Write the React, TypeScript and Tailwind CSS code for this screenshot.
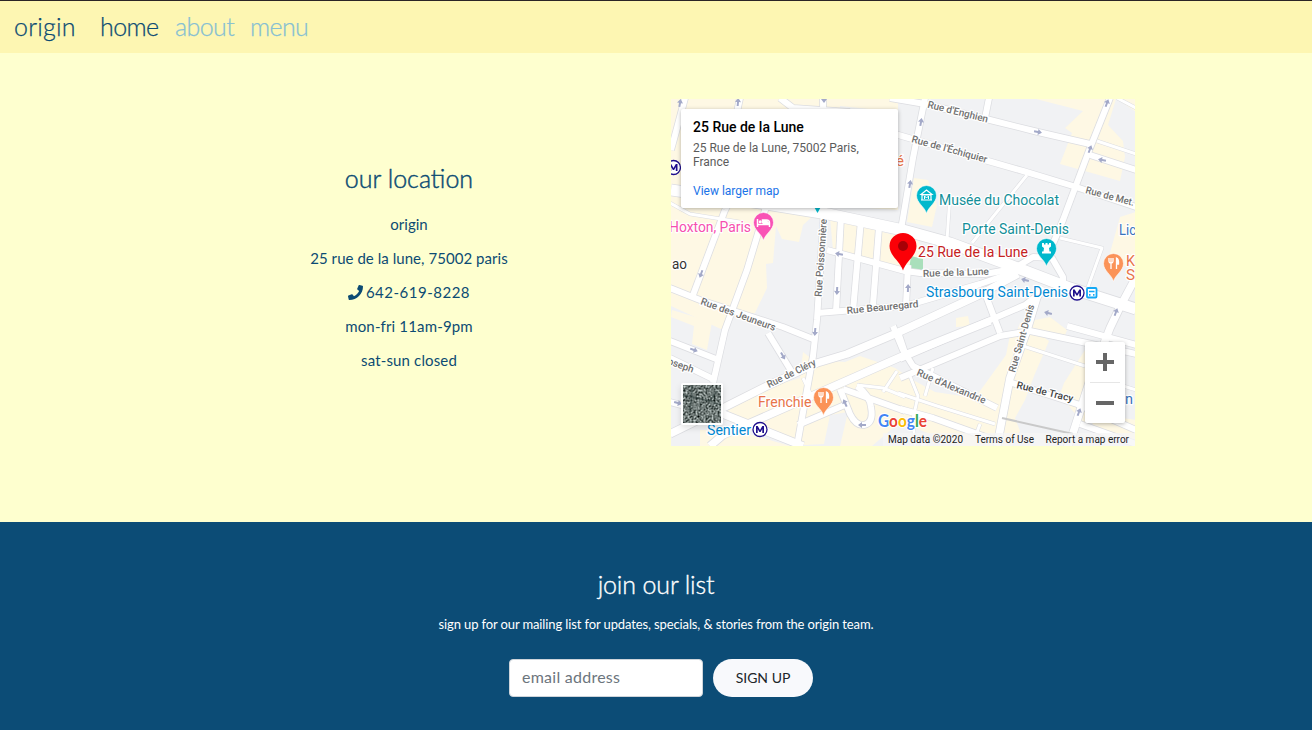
import React from "react";
import { FaPhone } from "react-icons/fa";

const minorRoads = [
  "M1097 141L1136 154", "M1117 98L1136 108", "M1027 175L992 218L972 243", "M950 195L949 210L947 240",
  "M1060 238L1102 248L1088 287", "M933 368L925 396", "M910 376L918 396L913 419L915 446",
  "M898 393L937 406L995 424", "M1023 346L1085 366", "M857 385L883 388L905 397", "M883 392L897 371",
  "M803 378L813 399", "M980 424L976 435", "M670 203L690 214L740 222", "M1120 385L1136 390",
];

const roads = [
  "M890 98L925 104L990 120L1038 132L1090 144", "M1090 155L1136 170",
  "M895 134L988 161L1023 171L1073 186L1136 207", "M925 98L913 158L903 218L900 235",
  "M989 98L985 118", "M1110 98L1090 148L1063 220L1047 258",
  "M725 210L693 295", "M790 150L765 210L747 270L725 330L713 383", "M736 190L725 210",
  "M670 288L700 300L783 327L813 339", "M823 98L824 210L817 320L813 356L797 446",
  "M841 217L836 312", "M861 220L853 311", "M879 227L873 305",
  "M827 250L905 271L920 273L985 274L1013 269L1033 257L1052 258L1063 277L1063 288",
  "M817 313L905 306L980 284L1015 272", "M908 265L906 306",
  "M670 341L716 359", "M670 358L713 379", "M670 402L685 406",
  "M768 333L793 374", "M897 329L905 353", "M798 425L847 404",
  "M840 389L850 414Q856 426 864 425Q874 423 871 407Q870 396 857 386", "M843 389L905 411",
  "M893 326L903 350L913 366L997 408", "M983 288L1000 333",
  "M900 378L1000 336L1030 331L1087 343L1136 354", "M900 409L933 418L997 441",
  "M1012 383L1077 404L1136 430", "M1080 424L1136 444", "M1067 326L1136 345",
  "M685 98L677 128L671 150", "M740 98L730 145", "M780 98L793 108L850 112",
  "M900 359L1025 305L1043 291", "M920 438L925 446",
];

const mainRoads = [
  "M670 434L723 408L767 386L817 363L847 354L897 333L977 296L1018 274",
  "M710 446L723 435L830 388L905 355L990 321",
  "M700 401L723 414L803 446",
  "M1043 287L1037 297L1027 330L1010 378L997 446",
  "M1136 277L1120 307L1110 328L1090 380L1073 433L1067 448",
];

const yellowBlocks = [
  "M671 99H898V112L840 106L835 170L898 180V210L825 205L803 225L799 242L782 239L776 226L773 263L766 264L767 288L755 313L730 317L723 330L671 306Z",
  "M672 310L712 322L707 350L692 344L694 326L671 317Z",
  "M830 218L890 234L918 240L926 258L900 268L833 250Z",
  "M1036 99H1116L1108 125L1123 141L1125 157L1120 181L1060 164L1072 133L1065 128L1083 111Z",
  "M1117 99H1136V112Z",
  "M914 178L928 180L937 205L932 227L907 222Z",
  "M1136 212L1120 217L1108 260L1136 270Z",
  "M803 352L813 360L845 362L860 356L895 368L913 380L935 392L975 398L1006 355L1010 335L1033 329L1049 341L1034 376L1025 400L1015 418L1020 431L1010 446H960L900 422L872 446H840L848 412L830 415L824 444L805 445L725 420L728 408L760 390L800 378Z",
  "M700 430L735 430L790 446H700Z",
  "M956 318L968 316L970 326L956 327Z", "M1020 323L1050 317L1067 330L1064 338L1016 333Z",
  "M1064 383L1085 350V425L1072 410L1060 394Z",
  "M1086 413L1136 420V440L1095 428Z",
];

const MapLabel = ({ x, y, w, size = 14, fill = "#707070", r = 0, weight = 400, children }: {
  x: number; y: number; w: number; size?: number; fill?: string; r?: number; weight?: number; children: string;
}) => (
  <text x={x} y={y} fontSize={size} fill={fill} fontWeight={size === 10 ? 500 : weight} textLength={w} lengthAdjust="spacingAndGlyphs"
    transform={`rotate(${r} ${x} ${y})`} stroke="#fff" strokeWidth="2.5" strokeLinejoin="round" paintOrder="stroke">
    {children}
  </text>
);

const Pin = ({ x, y, color, children }: { x: number; y: number; color: string; children?: React.ReactNode }) => (
  <g transform={`translate(${x} ${y})`}>
    <path d="M0 17.500C-1.500 11 -10 7 -10 -.5A10 10 0 1 1 10 -.5C10 7 1.500 11 0 17.500Z" fill={color} stroke="#fff" strokeWidth="0.600" />
    {children}
  </g>
);

const Fork = () => (
  <g fill="none" stroke="#fff" strokeWidth="1.300">
    <path d="M-4.500 -6V-3Q-4.500 -1 -2.500 -1Q-.5 -1 -.5 -3V-6M-2.500 -6V5" />
    <path d="M3 5V-6Q5.500 -5 5 0H3" fill="#fff" />
  </g>
);

const Metro = ({ x, y }: { x: number; y: number }) => (
  <g transform={`translate(${x} ${y})`}>
    <circle r="7" fill="#fff" stroke="#1e0e8c" strokeWidth="1.300" />
    <path d="M-4 3.500V-3.500H-2.300L0 .5L2.300 -3.500H4V3.500H2.300V-.5L.6 2.600H-.6L-2.300 -.5V3.500Z" fill="#1e0e8c" />
  </g>
);

const Arrow = ({ x, y, r }: { x: number; y: number; r: number }) => (
  <path d="M-4 -1H0V-3L4 0L0 3V1H-4Z" fill="#a3a9c8" transform={`translate(${x} ${y}) rotate(${r})`} />
);

const arrows = [
  [1038, 132, 10], [921, 122, -80], [910, 184, -80], [1090, 149, -70], [1102, 160, 190], [1107, 103, -70],
  [839, 254, 190], [837, 291, 93], [701, 274, 110], [1025, 280, 195], [908, 288, -88], [1116, 312, -70],
  [1048, 313, 195], [694, 350, 20], [815, 332, 95], [783, 356, 60], [845, 403, -115], [862, 425, 180],
  [680, 103, -80], [738, 102, -85], [1079, 412, -70], [678, 403, 15], [824, 99, 90],
];

function StreetMap() {
  return (
    <svg viewBox="671 99 464 347" className="block h-[347px] w-[464px]" fontFamily="Roboto, sans-serif">
      <defs>
        <filter id="aerial" x="0" y="0" width="1" height="1" colorInterpolationFilters="sRGB">
          <feTurbulence type="fractalNoise" baseFrequency="0.5" numOctaves="3" seed="4" />
          <feColorMatrix type="matrix" values="1.200 .2 0 0 -.27 1.200 .2 0 0 -.23 1.200 .2 0 0 -.24 0 0 0 0 1" />
        </filter>
      </defs>
      <rect x="671" y="99" width="464" height="347" fill="#f1f2f4" />
      {yellowBlocks.map((d) => <path key={d} d={d} fill="#fef8e4" />)}
      <path d="M911 256L923 259V271L909 270Z" fill="#a9dfbb" />
      <g fill="none" strokeLinejoin="round">
        <g stroke="#dcdde1">
          {minorRoads.map((d) => <path key={d} d={d} strokeWidth="4" />)}
          {roads.map((d) => <path key={d} d={d} strokeWidth="7.500" />)}
          {mainRoads.map((d) => <path key={d} d={d} strokeWidth="9" />)}
          <path d="M671 190L760 203L828 214L903 230L950 243L1007 264L1067 287L1136 309" strokeWidth="12.500" />
        </g>
        <g stroke="#fff">
          {minorRoads.map((d) => <path key={d} d={d} strokeWidth="3" />)}
          {roads.map((d) => <path key={d} d={d} strokeWidth="6" />)}
          {mainRoads.map((d) => <path key={d} d={d} strokeWidth="7.500" />)}
          <path d="M671 190L760 203L828 214L903 230L950 243L1007 264L1067 287L1136 309" strokeWidth="11" />
        </g>
        <path d="M1002 418L1073 434" stroke="#c9c9c9" strokeWidth="2" />
      </g>
      {arrows.map(([x, y, r]) => <Arrow key={`${x}-${y}`} x={x} y={y} r={r} />)}

      <MapLabel x={927} y={107.500} w={62} size={10} r={14}>Rue d'Enghien</MapLabel>
      <MapLabel x={911} y={142} w={78} size={10} r={15.500}>Rue de l'Échiquier</MapLabel>
      <MapLabel x={1085} y={193} w={50} size={10} r={15}>Rue de Met.</MapLabel>
      <MapLabel x={821.500} y={297} w={78} size={10} r={-86}>Rue Poissonnière</MapLabel>
      <MapLabel x={700} y={304} w={79} size={10} r={20}>Rue des Jeuneurs</MapLabel>
      <MapLabel x={847} y={314} w={72} size={10} r={-5.500}>Rue Beauregard</MapLabel>
      <MapLabel x={923} y={277} w={66} size={10} r={-2}>Rue de la Lune</MapLabel>
      <MapLabel x={1015} y={373} w={70} size={10} r={-74}>Rue Saint-Denis</MapLabel>
      <MapLabel x={769} y={388} w={53} size={10} r={-26}>Rue de Cléry</MapLabel>
      <MapLabel x={916} y={375} w={74} size={10} r={23}>Rue d'Alexandrie</MapLabel>
      <MapLabel x={1016} y={388} w={58} size={10} r={14} fill="#444">Rue de Tracy</MapLabel>
      <MapLabel x={667} y={364} w={27} size={10} r={19}>oseph</MapLabel>

      <MapLabel x={939} y={205} w={120} fill="#138f99">Musée du Chocolat</MapLabel>
      <MapLabel x={962} y={234} w={107} fill="#138f99">Porte Saint-Denis</MapLabel>
      <MapLabel x={918} y={257} w={110} fill="#c5221f">25 Rue de la Lune</MapLabel>
      <MapLabel x={926} y={297} w={142} fill="#0288d1">Strasbourg Saint-Denis</MapLabel>
      <MapLabel x={669} y={232} w={82} fill="#f64fae">Hoxton, Paris</MapLabel>
      <MapLabel x={672} y={269} w={15} fill="#333">ao</MapLabel>
      <MapLabel x={758} y={407} w={53.500} fill="#e8744a">Frenchie</MapLabel>
      <MapLabel x={707} y={435} w={44} fill="#0288d1">Sentier</MapLabel>
      <MapLabel x={1119} y={235} w={17} fill="#3973bb">Lic</MapLabel>
      <MapLabel x={1126} y={266} w={9} fill="#e8744a">K</MapLabel>
      <MapLabel x={1126} y={280} w={9} fill="#e8744a">S</MapLabel>
      <MapLabel x={1125} y={404} w={8} fill="#3973bb">n</MapLabel>
      <MapLabel x={896} y={166} w={8} fill="#e8744a">é</MapLabel>

      <Pin x={926.500} y={196} color="#00b8cc">
        <path d="M-5.500 -1.500L0 -6L5.500 -1.500ZM-4.500 -1H4.500V4H-4.500ZM-5.500 4H5.500" fill="none" stroke="#fff" strokeWidth="1.200" />
        <path d="M-2 3V0L0 2L2 0V3" fill="none" stroke="#fff" strokeWidth="1" />
      </Pin>
      <Pin x={1046.500} y={249} color="#00b8cc">
        <path d="M-4.500 -6H-2.500V-4.500H-1V-6H1V-4.500H2.500V-6H4.500V-2.500L2.500 -1L3 2.500H4.500V4.500H-4.500V2.500H-3L-2.500 -1L-4.500 -2.500Z" fill="#fff" />
      </Pin>
      <Pin x={763.500} y={223} color="#f952b5">
        <path d="M-6 -4V4M-6 1.500H6V4M-1 0V-3H3Q6 -3 6 0V1" fill="none" stroke="#fff" strokeWidth="1.500" />
        <path d="M-1 -3H3L6 0V1H-1Z" fill="#fff" /><circle cx="-3.300" cy="-1.300" r="1.500" fill="#fff" />
      </Pin>
      <Pin x={1113.500} y={264} color="#fb9358"><Fork /></Pin>
      <Pin x={823.500} y={398} color="#fb9358"><Fork /></Pin>
      <path d="M812 203H823L817.500 213Z" fill="#00b8cc" />
      <path d="M903 270.500C900 261 889.500 256 889.500 246A13.500 13 0 1 1 916.500 246C916.500 256 906 261 903 270.500Z" fill="#fb0007" />
      <circle cx="903" cy="246" r="5" fill="#a80006" />
      <Metro x={1077} y={293} />
      <Metro x={760} y={429.500} />
      <Metro x={673.500} y={167.500} />
      <rect x="1087" y="288" width="9.500" height="9.500" rx="1" fill="#fff" stroke="#14a9f5" strokeWidth="1.800" />
      <path d="M1089 291.500H1094.500M1089 294.800H1090.500M1093 294.800H1094.500" stroke="#14a9f5" strokeWidth="1.700" />

      <g className="drop-shadow-md">
        <rect x="681" y="383" width="42" height="42" rx="2" fill="#fff" />
      </g>
      <rect x="683" y="385" width="38" height="38" filter="url(#aerial)" />
      <path d="M683 395L702 399L721 405M709 402L717 391M692 385V398L689 412" stroke="#2b3a38" strokeWidth="1.800" fill="none" opacity=".55" />

      <text x="878" y="426.500" fontFamily="Lato, sans-serif" fontSize="16.500" fontWeight="700" textLength="49" lengthAdjust="spacingAndGlyphs" stroke="#fff" strokeWidth="2" paintOrder="stroke">
        <tspan fill="#4285f4">G</tspan><tspan fill="#ea4335">o</tspan><tspan fill="#fbbc05">o</tspan><tspan fill="#4285f4">g</tspan><tspan fill="#34a853">l</tspan><tspan fill="#ea4335">e</tspan>
      </text>
      <rect x="883" y="433" width="252" height="13" fill="#f5f5f5" opacity=".75" />
      <g fontSize="10" fill="#222">
        <text x="888" y="443" textLength="75">Map data ©2020</text>
        <text x="975" y="443" textLength="59">Terms of Use</text>
        <text x="1045.500" y="443" textLength="83.500">Report a map error</text>
      </g>
    </svg>
  );
}

export default function App() {
  return (
    <div className="flex h-[730px] w-[1312px] flex-col overflow-hidden bg-[#feffcf] font-['Lato',sans-serif] text-[#0c4b73]">
      <header className="flex h-[53px] items-center border-t border-[#2b2526] bg-[#fdf6b2] pb-[3px] pl-[14px] text-[25px] font-light leading-[38px] [-webkit-text-stroke:0.25px]">
        <a className="w-[86px] tracking-[0.2px]">origin</a>
        <nav className="flex tracking-[-0.6px]">
          <a className="w-[75px]">home</a>
          <a className="w-[75px] text-[#86bfd2]">about</a>
          <a className="text-[#86bfd2]">menu</a>
        </nav>
      </header>

      <main className="flex h-[469px] justify-center gap-[30px] pt-[46px]">
        <section className="w-[464px] pt-[62px] text-center text-[15px] leading-[34px]">
          <h2 className="mb-[12px] pt-px text-[25px] font-light leading-[33px] [-webkit-text-stroke:0.45px]">our location</h2>
          <p>origin</p>
          <p className="tracking-[0.05px]">25 rue de la lune, 75002 paris</p>
          <p className="flex items-center justify-center gap-[3px]"><FaPhone className="size-[15px]" /><span className="tracking-[0.5px]">642-619-8228</span></p>
          <p className="tracking-[0.15px]">mon-fri 11am-9pm</p>
          <p className="tracking-[0.15px]">sat-sun closed</p>
        </section>
        <section className="relative h-[347px] w-[464px] overflow-hidden font-['Roboto',sans-serif]">
          <StreetMap />
          <div className="absolute left-[10px] top-[10px] h-[99px] w-[217px] rounded-[2px] bg-white px-3 pt-[10px] text-[12px] leading-[14px] text-[#5b5b5b] shadow-[0_1px_4px_rgba(0,0,0,0.3)]">
            <h3 className="mb-[6px] text-[14px] font-medium leading-[16px] text-black">25 Rue de la Lune</h3>
            <p>25 Rue de la Lune, 75002 Paris,<br />France</p>
            <a className="mt-[15px] block text-[#1a73e8]">View larger map</a>
          </div>
          <div className="absolute left-[414px] top-[243px] flex h-[81px] w-[40px] flex-col items-center rounded-[2px] bg-white shadow-[0_1px_4px_rgba(0,0,0,0.3)]">
            <svg viewBox="0 0 18 18" className="mt-[11px] size-[18px]"><path d="M7 0H11V7H18V11H11V18H7V11H0V7H7Z" fill="#666" /></svg>
            <div className="mt-[11px] h-px w-[30px] bg-[#e6e6e6]" />
            <div className="mt-[18px] h-[4px] w-[18px] bg-[#666]" />
          </div>
        </section>
      </main>

      <footer className="flex h-[208px] flex-col items-center bg-[#0c4c76] pt-[45px] text-white">
        <h2 className="pt-px text-[25px] font-light leading-[33px] tracking-[-0.15px] [-webkit-text-stroke:0.35px]">join our list</h2>
        <p className="mt-[13px] text-[13px] leading-[20px] tracking-[-0.12px]">sign up for our mailing list for updates, specials, &amp; stories from the origin team.</p>
        <form className="ml-[10px] mt-[25px] flex gap-[10px]">
          <input placeholder="email address" className="h-[38px] w-[194px] rounded-[4px] border border-[#ced4da] bg-white px-3 pb-[3px] text-[16px] tracking-[0.25px] placeholder:text-[#6c757d]" />
          <button type="button" className="h-[38px] w-[100px] rounded-full bg-[#f8f9fc] pb-px text-[14px] text-[#212529]">SIGN UP</button>
        </form>
      </footer>
    </div>
  );
}
